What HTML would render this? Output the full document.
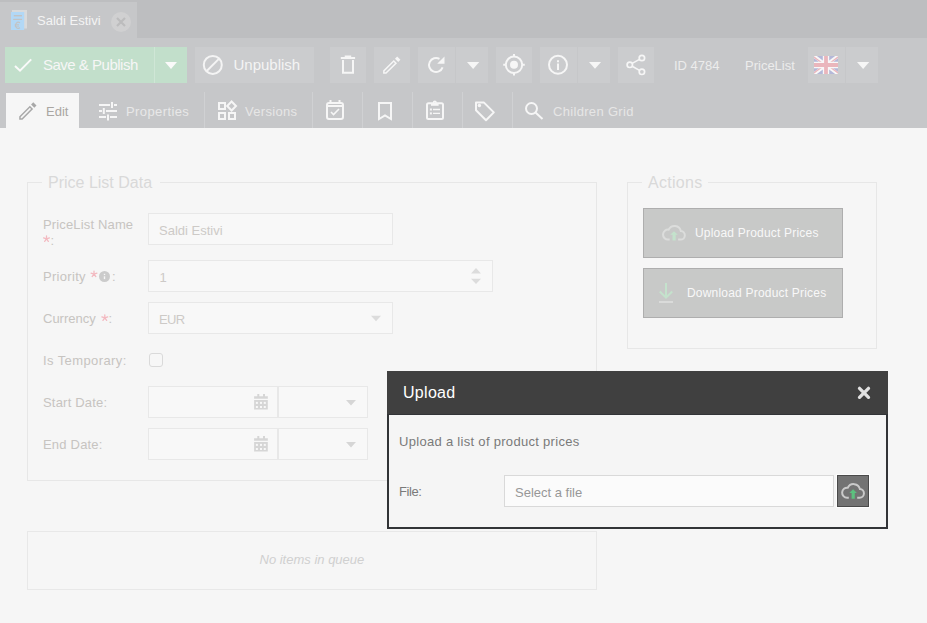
<!DOCTYPE html>
<html><head><meta charset="utf-8">
<style>
*{margin:0;padding:0;box-sizing:border-box}
html,body{width:927px;height:623px;overflow:hidden;background:#f6f6f6;font-family:"Liberation Sans",sans-serif}
.a{position:absolute}
.t{position:absolute;line-height:1;white-space:nowrap}
svg{position:absolute;overflow:visible}
</style></head><body>
<!-- tab bar -->
<div class="a" style="left:0;top:0;width:927px;height:38px;background:#bdbec0"></div>
<div class="a" style="left:0;top:2px;width:137px;height:36px;background:#c6c7c9"></div>
<!-- toolbar -->
<div class="a" style="left:0;top:38px;width:927px;height:90px;background:#c6c7c9"></div>

<!-- doc icon -->
<svg style="left:0;top:0" width="40" height="40">
  <rect x="12" y="10" width="15" height="18.5" fill="#d9dadb"/>
  <rect x="11" y="12" width="13.2" height="18" fill="#b2d8f6"/>
  <rect x="13.8" y="15" width="8.2" height="1.4" fill="#c3c3c3"/>
  <rect x="13.2" y="18.8" width="8.8" height="1.2" fill="#c3c3c3"/>
  <path d="M20 22.8 A2.9 3 0 1 0 20 27.8" stroke="#c3c3c3" stroke-width="1.1" fill="none"/>
  <path d="M14.8 24.6 H19 M14.8 26.1 H19" stroke="#c3c3c3" stroke-width="0.8"/>
</svg>
<div class="t" style="left:37px;top:13.6px;font-size:13px;color:#f4f4f4">Saldi Estivi</div>
<svg style="left:0;top:0" width="140" height="40">
  <circle cx="121" cy="22" r="10" fill="#d0d0d1"/>
  <path d="M117 18 L125 26 M125 18 L117 26" stroke="#bcbcbd" stroke-width="2.2"/>
</svg>

<!-- Save & publish -->
<div class="a" style="left:5px;top:47px;width:182px;height:36px;background:#c2dfcb"></div>
<div class="a" style="left:154px;top:47px;width:1px;height:36px;background:#cfe6d6"></div>
<svg style="left:0;top:0" width="200" height="90">
  <path d="M15 66 L20 70.7 L31.2 59.4" stroke="#fafafa" stroke-width="2" fill="none"/>
  <path d="M165 62 L177 62 L171 69 Z" fill="#fafafa"/>
</svg>
<div class="t" style="left:43px;top:57px;font-size:15px;color:#f6f6f6;letter-spacing:-0.5px">Save &amp; Publish</div>

<!-- Unpublish -->
<div class="a" style="left:195px;top:47px;width:119px;height:36px;background:#cbccce"></div>
<svg style="left:0;top:0" width="320" height="90">
  <circle cx="212.8" cy="64.9" r="9" stroke="#f4f4f4" stroke-width="2" fill="none"/>
  <path d="M206.5 71.2 L219.1 58.6" stroke="#f4f4f4" stroke-width="2"/>
</svg>
<div class="t" style="left:233.5px;top:57px;font-size:15px;color:#f4f4f4">Unpublish</div>

<!-- icon buttons -->
<div class="a" style="left:330px;top:47px;width:36px;height:36px;background:#cbccce"></div>
<div class="a" style="left:374px;top:47px;width:36px;height:36px;background:#cbccce"></div>
<div class="a" style="left:418px;top:47px;width:70px;height:36px;background:#cbccce"></div>
<div class="a" style="left:455px;top:47px;width:1px;height:36px;background:#c6c7c9"></div>
<div class="a" style="left:496px;top:47px;width:36px;height:36px;background:#cbccce"></div>
<div class="a" style="left:540px;top:47px;width:70px;height:36px;background:#cbccce"></div>
<div class="a" style="left:577px;top:47px;width:1px;height:36px;background:#c6c7c9"></div>
<div class="a" style="left:618px;top:47px;width:36px;height:36px;background:#cbccce"></div>
<div class="a" style="left:808px;top:47px;width:70px;height:36px;background:#cbccce"></div>
<div class="a" style="left:845px;top:47px;width:1px;height:36px;background:#c6c7c9"></div>

<svg style="left:0;top:0" width="927" height="90">
  <g stroke="#f6f6f6" fill="none" stroke-width="2">
    <!-- trash -->
    <path d="M340.8 58 L355.1 58"/>
    <path d="M344.7 56.5 L351.2 56.5"/>
    <path d="M343 60 L343 72.8 L353 72.8 L353 60"/>
    <!-- pencil -->
    <path d="M393.77 59.92 L383.10 70.60 L383.10 73.85 L386.35 73.85 L397.03 63.18 Z M393.77 62.04 L384.60 71.22 L384.60 72.35 L385.73 72.35 L394.91 63.18 Z" fill="#f6f6f6" stroke="none" fill-rule="evenodd"/>
    <path d="M394.98 58.72 L397.17 56.53 L400.42 59.78 L398.23 61.97 Z" fill="#f6f6f6" stroke="none"/>
    <!-- reload -->
    <path d="M442.6 67.4 A7 7 0 1 1 439.5 58.9" />
    <path d="M444.5 56.5 L444.5 63.8 L437.2 63.8 Z" fill="#f6f6f6" stroke="none"/>
    <!-- locate -->
    <circle cx="514" cy="64.8" r="8.2"/>
    <circle cx="514" cy="64.8" r="4" fill="#f6f6f6" stroke="none"/>
    <path d="M514 54 L514 56.5 M514 73 L514 75.5 M503.2 64.8 L505.7 64.8 M522.3 64.8 L524.8 64.8"/>
    <!-- info -->
    <circle cx="558" cy="64.8" r="9"/>
    <path d="M558 60.3 L558 62.2 M558 63.6 L558 69.9"/>
    <!-- share -->
    <circle cx="641.9" cy="58" r="2.7" stroke-width="1.7"/>
    <circle cx="629.8" cy="64.8" r="2.7" stroke-width="1.7"/>
    <circle cx="641.9" cy="71.8" r="2.7" stroke-width="1.7"/>
    <path d="M632.2 63.4 L639.5 59.4 M632.2 66.2 L639.5 70.4" stroke-width="1.6"/>
  </g>
  <g fill="#f6f6f6">
    <path d="M467 62 L479.3 62 L473.1 69 Z"/>
    <path d="M589 62.1 L601.1 62.1 L595 68.8 Z"/>
    <path d="M857 62 L869.3 62 L863.1 69 Z"/>
  </g>
  <!-- flag -->
  <clipPath id="fc"><rect x="814" y="56" width="24" height="18"/></clipPath>
  <g clip-path="url(#fc)">
  <g transform="translate(814 56)">
    <rect width="24" height="18" fill="#b4b8d8"/>
    <path d="M0 0 L24 18 M24 0 L0 18" stroke="#f8f8f8" stroke-width="3.4"/>
    <path d="M-1 0.4 L12 10 M25 0.4 L12 10 M-1 17.6 L12 8 M25 17.6 L12 8" stroke="#eab6bc" stroke-width="1.3"/>
    <path d="M12 0 V18 M0 9 H24" stroke="#f8f8f8" stroke-width="6.4"/>
    <path d="M12 0 V18 M0 9 H24" stroke="#eab6bc" stroke-width="3.8"/>
  </g></g>
</svg>
<div class="t" style="left:674px;top:58.6px;font-size:13px;color:#ececec">ID 4784</div>
<div class="t" style="left:745px;top:58.6px;font-size:13px;color:#ececec">PriceList</div>

<!-- tabs -->
<div class="a" style="left:6px;top:93px;width:73px;height:35px;background:#f6f6f6"></div>
<div class="a" style="left:204px;top:92px;width:1px;height:36px;background:#d0d1d3"></div>
<div class="a" style="left:312px;top:92px;width:1px;height:36px;background:#d0d1d3"></div>
<div class="a" style="left:362px;top:92px;width:1px;height:36px;background:#d0d1d3"></div>
<div class="a" style="left:412px;top:92px;width:1px;height:36px;background:#d0d1d3"></div>
<div class="a" style="left:462px;top:92px;width:1px;height:36px;background:#d0d1d3"></div>
<div class="a" style="left:512px;top:92px;width:1px;height:36px;background:#d0d1d3"></div>
<div class="t" style="left:46px;top:105px;font-size:13px;color:#aaa6a2">Edit</div>
<div class="t" style="left:126px;top:105px;font-size:13px;color:#e8e8e8;letter-spacing:0.4px">Properties</div>
<div class="t" style="left:245px;top:105px;font-size:13px;color:#e6e6e6;letter-spacing:0.3px">Versions</div>
<div class="t" style="left:553px;top:105px;font-size:13px;color:#e6e6e6;letter-spacing:0.32px">Children Grid</div>
<svg style="left:0;top:0" width="927" height="130">
  <g fill="#a8a8a8">
    <path d="M29.87 105.72 L19.20 116.40 L19.20 119.65 L22.45 119.65 L33.13 108.98 Z M29.87 107.84 L20.70 117.02 L20.70 118.15 L21.83 118.15 L31.01 108.98 Z" fill-rule="evenodd"/>
    <path d="M31.08 104.52 L33.27 102.33 L36.52 105.58 L34.33 107.77 Z"/>
  </g>
  <g stroke="#f6f6f6" fill="none" stroke-width="2">
    <!-- sliders -->
    <path d="M99 105 H110 M114 105 H117 M112 102 V108"/>
    <path d="M99 111 H102 M106 111 H117 M103.8 108 V114"/>
    <path d="M99 117 H106 M110 117 H117 M108 114.5 V120.5"/>
    <!-- versions -->
    <rect x="219" y="103" width="6" height="6"/>
    <rect x="219" y="113" width="6" height="6"/>
    <rect x="229" y="113" width="6" height="6"/>
    <path d="M231.6 101.5 L236 106 L231.6 110.5 L227.2 106 Z"/>
    <!-- calendar -->
    <rect x="327" y="103" width="16" height="16" rx="2"/>
    <path d="M327 106 H343"/>
    <path d="M330.5 100 V103 M339.5 100 V103"/>
    <path d="M331 112 L333.5 114.5 L339 109" stroke-width="1.6"/>
    <!-- bookmark -->
    <path d="M379 103 H391 V119 L385 115.5 L379 119 Z"/>
    <!-- clipboard -->
    <rect x="427" y="103.2" width="16" height="15.8" rx="1.5"/>
    <rect x="431" y="103.8" width="7.6" height="2" fill="#f6f6f6" stroke="none"/>
    <circle cx="434.8" cy="102.5" r="1.3" stroke-width="1.4"/>
    <path d="M433 109.5 H440 M433 113.4 H440" stroke-width="1.3"/>
    <rect x="429.9" y="108.5" width="2" height="2" fill="#f6f6f6" stroke="none"/>
    <rect x="429.9" y="112.4" width="2" height="2" fill="#f6f6f6" stroke="none"/>
    <!-- tag -->
    <path d="M476 102.6 H484 L493.8 112.4 L486 120.2 L476 110.2 Z" stroke-linejoin="round"/>
    <circle cx="479.4" cy="105.5" r="1.7" fill="#f6f6f6" stroke="none"/>
    <!-- search -->
    <circle cx="531.5" cy="108.5" r="5.5"/>
    <path d="M535.5 112.5 L542.5 119"/>
  </g>
</svg>

<!-- form fieldset -->
<div class="a" style="left:27px;top:182px;width:570px;height:299px;border:1px solid #e7e7e7"></div>
<div class="a" style="left:42px;top:175px;width:118px;height:14px;background:#f6f6f6"></div>
<div class="t" style="left:48px;top:174.5px;font-size:16px;color:#d9d9d9">Price List Data</div>

<div class="t" style="left:43px;top:218px;font-size:13px;color:#c7c4c1;letter-spacing:0.15px">PriceList Name</div>
<div class="t" style="left:50.5px;top:234px;font-size:13px;color:#c7c4c1">:</div>
<svg style="left:0;top:0" width="200" height="340"><path d="M46.50 238.90 L46.50 235.80 M46.50 238.90 L49.45 237.94 M46.50 238.90 L48.32 241.41 M46.50 238.90 L44.68 241.41 M46.50 238.90 L43.55 237.94 M94.00 274.10 L94.00 271.00 M94.00 274.10 L96.95 273.14 M94.00 274.10 L95.82 276.61 M94.00 274.10 L92.18 276.61 M94.00 274.10 L91.05 273.14 M104.80 317.90 L104.80 314.80 M104.80 317.90 L107.75 316.94 M104.80 317.90 L106.62 320.41 M104.80 317.90 L102.98 320.41 M104.80 317.90 L101.85 316.94 " stroke="#f3b9c0" stroke-width="1.25" stroke-linecap="round" fill="none"/></svg>
<div class="a" style="left:148px;top:213px;width:245px;height:32px;background:#f8f8f8;border:1px solid #e8e8e8"></div>
<div class="t" style="left:159px;top:223.5px;font-size:13px;color:#cdcac7">Saldi Estivi</div>

<div class="t" style="left:43px;top:270px;font-size:13px;color:#c7c4c1;letter-spacing:0.3px">Priority</div>
<svg style="left:0;top:0" width="200" height="300">
  <circle cx="104.5" cy="276.5" r="5.5" fill="#cbcbcb"/>
  <rect x="103.8" y="276.3" width="1.4" height="2.8" fill="#f6f6f6"/>
  <rect x="103.8" y="273.8" width="1.4" height="1.3" fill="#f6f6f6"/>
</svg>
<div class="t" style="left:112px;top:270px;font-size:13px;color:#c7c4c1">:</div>
<div class="a" style="left:148px;top:260px;width:345px;height:32px;background:#f8f8f8;border:1px solid #e8e8e8"></div>
<div class="t" style="left:159.5px;top:270.5px;font-size:13px;color:#cdcac7">1</div>
<svg style="left:0;top:0" width="500" height="340">
  <path d="M471 273.5 L481 273.5 L476 268 Z M471 278.7 L481 278.7 L476 284 Z" fill="#dcdcdc"/>
</svg>

<div class="t" style="left:43px;top:312px;font-size:13px;color:#c7c4c1">Currency</div>
<div class="t" style="left:108.5px;top:312px;font-size:13px;color:#c7c4c1">:</div>
<div class="a" style="left:148px;top:302px;width:245px;height:32px;background:#f8f8f8;border:1px solid #e8e8e8"></div>
<svg style="left:0;top:0" width="400" height="340"><path d="M371 315.7 L381 315.7 L376 321.3 Z" fill="#dcdcdc"/></svg>
<div class="t" style="left:159px;top:312.5px;font-size:13px;color:#cdcac7;letter-spacing:-0.6px">EUR</div>

<div class="t" style="left:43px;top:354px;font-size:13px;color:#c7c4c1;letter-spacing:0.4px">Is Temporary:</div>
<div class="a" style="left:149px;top:353px;width:14px;height:14px;border:1px solid #dadada;border-radius:3px;background:#f7f7f7"></div>

<div class="t" style="left:43px;top:396px;font-size:13px;color:#c7c4c1;letter-spacing:0.2px">Start Date:</div>
<div class="a" style="left:148px;top:386px;width:130px;height:32px;background:#f8f8f8;border:1px solid #e8e8e8"></div>
<div class="a" style="left:278px;top:386px;width:90px;height:32px;background:#f8f8f8;border:1px solid #e8e8e8"></div>
<div class="t" style="left:43px;top:438px;font-size:13px;color:#c7c4c1;letter-spacing:0.2px">End Date:</div>
<div class="a" style="left:148px;top:428px;width:130px;height:32px;background:#f8f8f8;border:1px solid #e8e8e8"></div>
<div class="a" style="left:278px;top:428px;width:90px;height:32px;background:#f8f8f8;border:1px solid #e8e8e8"></div>
<svg style="left:0;top:0" width="400" height="470">
<path d="M254.1 396.2 H267.8 V398.7 H254.1 Z M254.1 400.1 H267.8 V409.6 H254.1 Z M257.3 394.0 H259.3 V396.5 H257.3 Z M263 394.0 H265 V396.5 H263 Z" fill="#d6d6d6"/><rect x="255.9" y="401.9" width="2" height="2" fill="#f8f8f8"/><rect x="255.9" y="406.0" width="2" height="2" fill="#f8f8f8"/><rect x="260.0" y="401.9" width="2" height="2" fill="#f8f8f8"/><rect x="260.0" y="406.0" width="2" height="2" fill="#f8f8f8"/><rect x="263.8" y="401.9" width="2" height="2" fill="#f8f8f8"/><rect x="263.8" y="406.0" width="2" height="2" fill="#f8f8f8"/>
<path d="M254.1 438.2 H267.8 V440.7 H254.1 Z M254.1 442.1 H267.8 V451.6 H254.1 Z M257.3 436.0 H259.3 V438.5 H257.3 Z M263 436.0 H265 V438.5 H263 Z" fill="#d6d6d6"/><rect x="255.9" y="443.9" width="2" height="2" fill="#f8f8f8"/><rect x="255.9" y="448.0" width="2" height="2" fill="#f8f8f8"/><rect x="260.0" y="443.9" width="2" height="2" fill="#f8f8f8"/><rect x="260.0" y="448.0" width="2" height="2" fill="#f8f8f8"/><rect x="263.8" y="443.9" width="2" height="2" fill="#f8f8f8"/><rect x="263.8" y="448.0" width="2" height="2" fill="#f8f8f8"/>
<path d="M346 400 L356 400 L351 405.5 Z M346 442 L356 442 L351 447.5 Z" fill="#d6d6d6"/>
</svg>

<!-- queue -->
<div class="a" style="left:27px;top:531px;width:570px;height:59px;border:1px solid #e8e8e8"></div>
<div class="t" style="left:259.5px;top:553.2px;font-size:13px;color:#d0d0d0;font-style:italic">No items in queue</div>

<!-- actions fieldset -->
<div class="a" style="left:627px;top:182px;width:250px;height:167px;border:1px solid #e7e7e7"></div>
<div class="a" style="left:642px;top:175px;width:66px;height:14px;background:#f6f6f6"></div>
<div class="t" style="left:648px;top:175px;font-size:16px;color:#d9d9d9;letter-spacing:0.3px">Actions</div>

<div class="a" style="left:643px;top:208px;width:200px;height:50px;background:#c8c9c8;border:1px solid #aeaeae"></div>
<div class="a" style="left:643px;top:268px;width:200px;height:50px;background:#c8c9c8;border:1px solid #aeaeae"></div>
<div class="t" style="left:695px;top:226.5px;font-size:12px;color:#f8f8f8;letter-spacing:0.2px">Upload Product Prices</div>
<div class="t" style="left:687px;top:286.9px;font-size:12px;color:#f8f8f8;letter-spacing:0.2px">Download Product Prices</div>
<svg style="left:0;top:0" width="927" height="330">
  <path d="M669.7 239.6 H668.0 A5.0 5.0 0 1 1 668.66 229.64 A6.5 6.5 0 0 1 680.83 231.01 A4.3 4.3 0 0 1 680.50 239.60 H678.1" stroke="#dcdddc" stroke-width="2" fill="none"/>
  <path d="M674 231.2 L677.8 234.8 H675.7 V240.6 H672.5 V234.8 H670.2 Z" fill="#c4e2cc"/>
  <path d="M666 283 V297.5 M659.8 291.5 L666 297.7 L672.2 291.5" stroke="#c4e2cc" stroke-width="2" fill="none"/>
  <path d="M659 302 H673" stroke="#dcdddc" stroke-width="1.8"/>
</svg>

<!-- modal -->
<div class="a" style="left:387px;top:371px;width:501px;height:158px;background:#f5f5f5;border:2px solid #323437;border-top:0"></div>
<div class="a" style="left:387px;top:371px;width:501px;height:44px;background:#404040;border-bottom:1px solid #323437"></div>
<div class="t" style="left:403px;top:385px;font-size:16px;color:#ffffff;letter-spacing:0.3px">Upload</div>
<svg style="left:0;top:0" width="927" height="530">
  <path d="M859.5 388.3 L868.5 397.3 M868.5 388.3 L859.5 397.3" stroke="#e2e2e2" stroke-width="3.3" stroke-linecap="round"/>
</svg>
<div class="t" style="left:399px;top:434.8px;font-size:13px;color:#7a7a7a;letter-spacing:0.3px">Upload a list of product prices</div>
<div class="t" style="left:399px;top:485.3px;font-size:13px;color:#7a7a7a;letter-spacing:-0.4px">File:</div>
<div class="a" style="left:504px;top:475px;width:330px;height:32px;background:#fbfbfb;border:1px solid #d9d9d9"></div>
<div class="t" style="left:515px;top:485.9px;font-size:13px;color:#979797">Select a file</div>
<div class="a" style="left:836px;top:474px;width:34px;height:34px;background:#fdfdfd"></div>
<div class="a" style="left:837px;top:475px;width:32px;height:32px;background:#737373;border:1px solid #4a4a4a"></div>
<svg style="left:0;top:0" width="927" height="530">
  <path d="M848.8 497.7 H847.1 A5.0 5.0 0 1 1 847.76 487.74 A6.5 6.5 0 0 1 859.93 489.11 A4.3 4.3 0 0 1 859.60 497.70 H857.2" stroke="#cacaca" stroke-width="2" fill="none"/>
  <path d="M853.1 489.3 L856.9 492.9 H854.8 V498.7 H851.6 V492.9 H849.3 Z" fill="#5cc07e"/>
</svg>
</body></html>
